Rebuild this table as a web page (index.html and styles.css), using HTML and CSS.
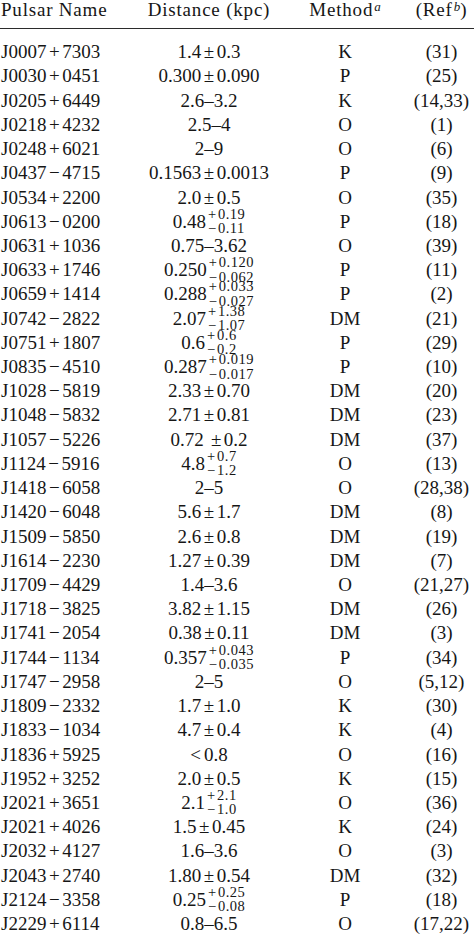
FILE: index.html
```html
<!DOCTYPE html>
<html>
<head>
<meta charset="utf-8">
<link rel="stylesheet" href="styles.css">
</head>
<body>
<div class="table">
  <div class="head">
    <div class="c c1">Pulsar Name</div>
    <div class="c">Distance (kpc)</div>
    <div class="c">Method<span class="hs">a</span></div>
    <div class="c c4">(Ref<span class="hs">b</span>)</div>
  </div>
  <div class="rule"></div>
  <div class="body">
    <div class="row"><div class="c c1">J0007<span class="op">+</span>7303</div><div class="c c2">1.4<span class="op">±</span>0.3</div><div class="c c3">K</div><div class="c c4">(31)</div></div>
    <div class="row"><div class="c c1">J0030<span class="op">+</span>0451</div><div class="c c2">0.300<span class="op">±</span>0.090</div><div class="c c3">P</div><div class="c c4">(25)</div></div>
    <div class="row"><div class="c c1">J0205<span class="op">+</span>6449</div><div class="c c2">2.6–3.2</div><div class="c c3">K</div><div class="c c4">(14,33)</div></div>
    <div class="row"><div class="c c1">J0218<span class="op">+</span>4232</div><div class="c c2">2.5–4</div><div class="c c3">O</div><div class="c c4">(1)</div></div>
    <div class="row"><div class="c c1">J0248<span class="op">+</span>6021</div><div class="c c2">2–9</div><div class="c c3">O</div><div class="c c4">(6)</div></div>
    <div class="row"><div class="c c1">J0437<span class="op">−</span>4715</div><div class="c c2">0.1563<span class="op">±</span>0.0013</div><div class="c c3">P</div><div class="c c4">(9)</div></div>
    <div class="row"><div class="c c1">J0534<span class="op">+</span>2200</div><div class="c c2">2.0<span class="op">±</span>0.5</div><div class="c c3">O</div><div class="c c4">(35)</div></div>
    <div class="row"><div class="c c1">J0613<span class="op">−</span>0200</div><div class="c c2">0.48<span class="ss"><span class="sup"><span class="sop">+</span>0.19</span><span class="sub"><span class="sop">−</span>0.11</span></span></div><div class="c c3">P</div><div class="c c4">(18)</div></div>
    <div class="row"><div class="c c1">J0631<span class="op">+</span>1036</div><div class="c c2">0.75–3.62</div><div class="c c3">O</div><div class="c c4">(39)</div></div>
    <div class="row"><div class="c c1">J0633<span class="op">+</span>1746</div><div class="c c2">0.250<span class="ss"><span class="sup"><span class="sop">+</span>0.120</span><span class="sub"><span class="sop">−</span>0.062</span></span></div><div class="c c3">P</div><div class="c c4">(11)</div></div>
    <div class="row"><div class="c c1">J0659<span class="op">+</span>1414</div><div class="c c2">0.288<span class="ss"><span class="sup"><span class="sop">+</span>0.033</span><span class="sub"><span class="sop">−</span>0.027</span></span></div><div class="c c3">P</div><div class="c c4">(2)</div></div>
    <div class="row"><div class="c c1">J0742<span class="op">−</span>2822</div><div class="c c2">2.07<span class="ss"><span class="sup"><span class="sop">+</span>1.38</span><span class="sub"><span class="sop">−</span>1.07</span></span></div><div class="c c3">DM</div><div class="c c4">(21)</div></div>
    <div class="row"><div class="c c1">J0751<span class="op">+</span>1807</div><div class="c c2">0.6<span class="ss"><span class="sup"><span class="sop">+</span>0.6</span><span class="sub"><span class="sop">−</span>0.2</span></span></div><div class="c c3">P</div><div class="c c4">(29)</div></div>
    <div class="row"><div class="c c1">J0835<span class="op">−</span>4510</div><div class="c c2">0.287<span class="ss"><span class="sup"><span class="sop">+</span>0.019</span><span class="sub"><span class="sop">−</span>0.017</span></span></div><div class="c c3">P</div><div class="c c4">(10)</div></div>
    <div class="row"><div class="c c1">J1028<span class="op">−</span>5819</div><div class="c c2">2.33<span class="op">±</span>0.70</div><div class="c c3">DM</div><div class="c c4">(20)</div></div>
    <div class="row"><div class="c c1">J1048<span class="op">−</span>5832</div><div class="c c2">2.71<span class="op">±</span>0.81</div><div class="c c3">DM</div><div class="c c4">(23)</div></div>
    <div class="row"><div class="c c1">J1057<span class="op">−</span>5226</div><div class="c c2">0.72 <span class="op">±</span>0.2</div><div class="c c3">DM</div><div class="c c4">(37)</div></div>
    <div class="row"><div class="c c1">J1124<span class="op">−</span>5916</div><div class="c c2">4.8<span class="ss"><span class="sup"><span class="sop">+</span>0.7</span><span class="sub"><span class="sop">−</span>1.2</span></span></div><div class="c c3">O</div><div class="c c4">(13)</div></div>
    <div class="row"><div class="c c1">J1418<span class="op">−</span>6058</div><div class="c c2">2–5</div><div class="c c3">O</div><div class="c c4">(28,38)</div></div>
    <div class="row"><div class="c c1">J1420<span class="op">−</span>6048</div><div class="c c2">5.6<span class="op">±</span>1.7</div><div class="c c3">DM</div><div class="c c4">(8)</div></div>
    <div class="row"><div class="c c1">J1509<span class="op">−</span>5850</div><div class="c c2">2.6<span class="op">±</span>0.8</div><div class="c c3">DM</div><div class="c c4">(19)</div></div>
    <div class="row"><div class="c c1">J1614<span class="op">−</span>2230</div><div class="c c2">1.27<span class="op">±</span>0.39</div><div class="c c3">DM</div><div class="c c4">(7)</div></div>
    <div class="row"><div class="c c1">J1709<span class="op">−</span>4429</div><div class="c c2">1.4–3.6</div><div class="c c3">O</div><div class="c c4">(21,27)</div></div>
    <div class="row"><div class="c c1">J1718<span class="op">−</span>3825</div><div class="c c2">3.82<span class="op">±</span>1.15</div><div class="c c3">DM</div><div class="c c4">(26)</div></div>
    <div class="row"><div class="c c1">J1741<span class="op">−</span>2054</div><div class="c c2">0.38<span class="op">±</span>0.11</div><div class="c c3">DM</div><div class="c c4">(3)</div></div>
    <div class="row"><div class="c c1">J1744<span class="op">−</span>1134</div><div class="c c2">0.357<span class="ss"><span class="sup"><span class="sop">+</span>0.043</span><span class="sub"><span class="sop">−</span>0.035</span></span></div><div class="c c3">P</div><div class="c c4">(34)</div></div>
    <div class="row"><div class="c c1">J1747<span class="op">−</span>2958</div><div class="c c2">2–5</div><div class="c c3">O</div><div class="c c4">(5,12)</div></div>
    <div class="row"><div class="c c1">J1809<span class="op">−</span>2332</div><div class="c c2">1.7<span class="op">±</span>1.0</div><div class="c c3">K</div><div class="c c4">(30)</div></div>
    <div class="row"><div class="c c1">J1833<span class="op">−</span>1034</div><div class="c c2">4.7<span class="op">±</span>0.4</div><div class="c c3">K</div><div class="c c4">(4)</div></div>
    <div class="row"><div class="c c1">J1836<span class="op">+</span>5925</div><div class="c c2"><span class="rel">&lt;</span>0.8</div><div class="c c3">O</div><div class="c c4">(16)</div></div>
    <div class="row"><div class="c c1">J1952<span class="op">+</span>3252</div><div class="c c2">2.0<span class="op">±</span>0.5</div><div class="c c3">K</div><div class="c c4">(15)</div></div>
    <div class="row"><div class="c c1">J2021<span class="op">+</span>3651</div><div class="c c2">2.1<span class="ss"><span class="sup"><span class="sop">+</span>2.1</span><span class="sub"><span class="sop">−</span>1.0</span></span></div><div class="c c3">O</div><div class="c c4">(36)</div></div>
    <div class="row"><div class="c c1">J2021<span class="op">+</span>4026</div><div class="c c2">1.5<span class="op">±</span>0.45</div><div class="c c3">K</div><div class="c c4">(24)</div></div>
    <div class="row"><div class="c c1">J2032<span class="op">+</span>4127</div><div class="c c2">1.6–3.6</div><div class="c c3">O</div><div class="c c4">(3)</div></div>
    <div class="row"><div class="c c1">J2043<span class="op">+</span>2740</div><div class="c c2">1.80<span class="op">±</span>0.54</div><div class="c c3">DM</div><div class="c c4">(32)</div></div>
    <div class="row"><div class="c c1">J2124<span class="op">−</span>3358</div><div class="c c2">0.25<span class="ss"><span class="sup"><span class="sop">+</span>0.25</span><span class="sub"><span class="sop">−</span>0.08</span></span></div><div class="c c3">P</div><div class="c c4">(18)</div></div>
    <div class="row"><div class="c c1">J2229<span class="op">+</span>6114</div><div class="c c2">0.8–6.5</div><div class="c c3">O</div><div class="c c4">(17,22)</div></div>
  </div>
</div>
</body>
</html>
```
FILE: styles.css
```css
html, body {
  margin: 0;
  padding: 0;
  background: #ffffff;
}

body {
  font-family: "Liberation Serif", "Times New Roman", serif;
  font-size: 19px;
  color: #161616;
  overflow: hidden;
}

.table {
  width: 474px;
}

.head,
.row {
  display: grid;
  grid-template-columns: 140px 138px 134px 62px;
}

.head {
  height: 20px;
  line-height: 20px;
  margin-bottom: 7.5px;
  letter-spacing: 0.8px;
}

.rule {
  height: 1.4px;
  background: #2b2b2b;
  margin-bottom: 11.3px;
}

.row {
  height: 24.22px;
  line-height: 24.22px;
}

.c {
  display: block;
  text-align: center;
  white-space: nowrap;
}

.c1 {
  text-align: left;
  padding-left: 1px;
}

.c4 {
  padding-right: 3px;
}

.op {
  padding: 0 2.5px;
}

.rel {
  padding-right: 3px;
}

.hs {
  font-style: italic;
  font-size: 13px;
  line-height: 0;
  position: relative;
  top: -5.5px;
  letter-spacing: 0;
  padding-left: 1px;
}

.ss {
  display: inline-block;
  vertical-align: -5.5px;
  font-size: 14.5px;
  letter-spacing: 0.5px;
  line-height: 14.5px;
  margin: -5px 0 -5px 1px;
  text-align: left;
}

.sup,
.sub {
  display: block;
}

.sop {
  padding: 0 1.4px 0 1px;
}
```
